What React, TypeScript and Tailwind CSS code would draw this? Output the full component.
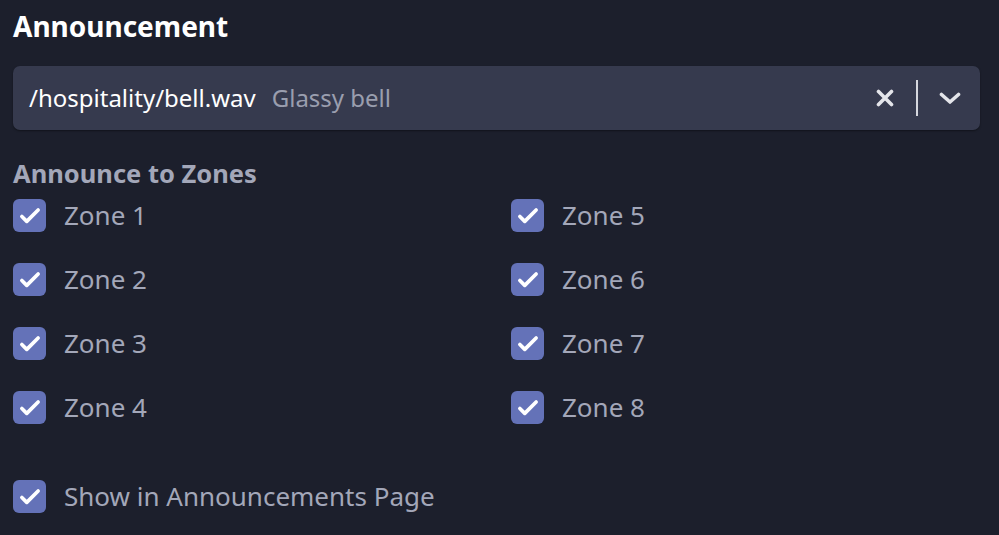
const zones = ["Zone 1", "Zone 5", "Zone 2", "Zone 6", "Zone 3", "Zone 7", "Zone 4", "Zone 8"];

function Checkbox({ label }: { label: string }) {
  return (
    <label className="flex h-[33px] items-center gap-[18px]">
      <span className="flex h-[33px] w-[33px] items-center justify-center rounded-[6px] bg-[#6472b8]">
        <svg viewBox="0 0 24 24" className="h-[26px] w-[26px]" fill="none" stroke="#fff" strokeWidth={3.4} strokeLinecap="round" strokeLinejoin="round">
          <path d="M4.5 12.5l4.5 4.5L19.5 6.5" />
        </svg>
      </span>
      <span className="text-[26px] text-[#a3a7b9]">{label}</span>
    </label>
  );
}

export default function App() {
  return (
    <div className="min-h-[535px] w-[999px] bg-[#1c1f2c] pl-[13px] pr-[19px] pt-[6px] font-['Noto_Sans',sans-serif]">
      <h1 className="text-[28px] font-bold leading-[40px] text-white">Announcement</h1>

      <div className="mt-[20px] flex h-[64px] items-center rounded-[7px] bg-[#363a4e] pl-[16px] pr-[19px] shadow-[0_1px_2px_rgba(0,0,0,0.4)]">
        <span className="text-[24px] text-white">/hospitality/bell.wav</span>
        <span className="ml-[16px] text-[24px] text-[#9a9eae]">Glassy bell</span>
        <div className="ml-auto flex items-center">
          <svg viewBox="0 0 18 18" className="h-[18px] w-[18px]" fill="none" stroke="#e4e5ea" strokeWidth={3.6} strokeLinecap="round">
            <path d="M2.5 2.5l13 13M15.5 2.5l-13 13" />
          </svg>
          <div className="ml-[22px] mr-[21px] h-[36px] w-[2px] bg-[#d6d7de]" />
          <svg viewBox="0 0 22 12" className="h-[12px] w-[22px]" fill="none" stroke="#e4e5ea" strokeWidth={3.6} strokeLinecap="round" strokeLinejoin="round">
            <path d="M2.5 2.5l8.5 7.5 8.5-7.5" />
          </svg>
        </div>
      </div>

      <div className="mt-[28px] text-[25.5px] font-bold leading-[30px] text-[#a3a7b9]">Announce to Zones</div>

      <div className="mt-[11px] grid grid-cols-[498px_1fr] gap-y-[31px]">
        {zones.map((z) => (
          <Checkbox key={z} label={z} />
        ))}
      </div>

      <div className="mt-[56px]">
        <Checkbox label="Show in Announcements Page" />
      </div>
    </div>
  );
}
